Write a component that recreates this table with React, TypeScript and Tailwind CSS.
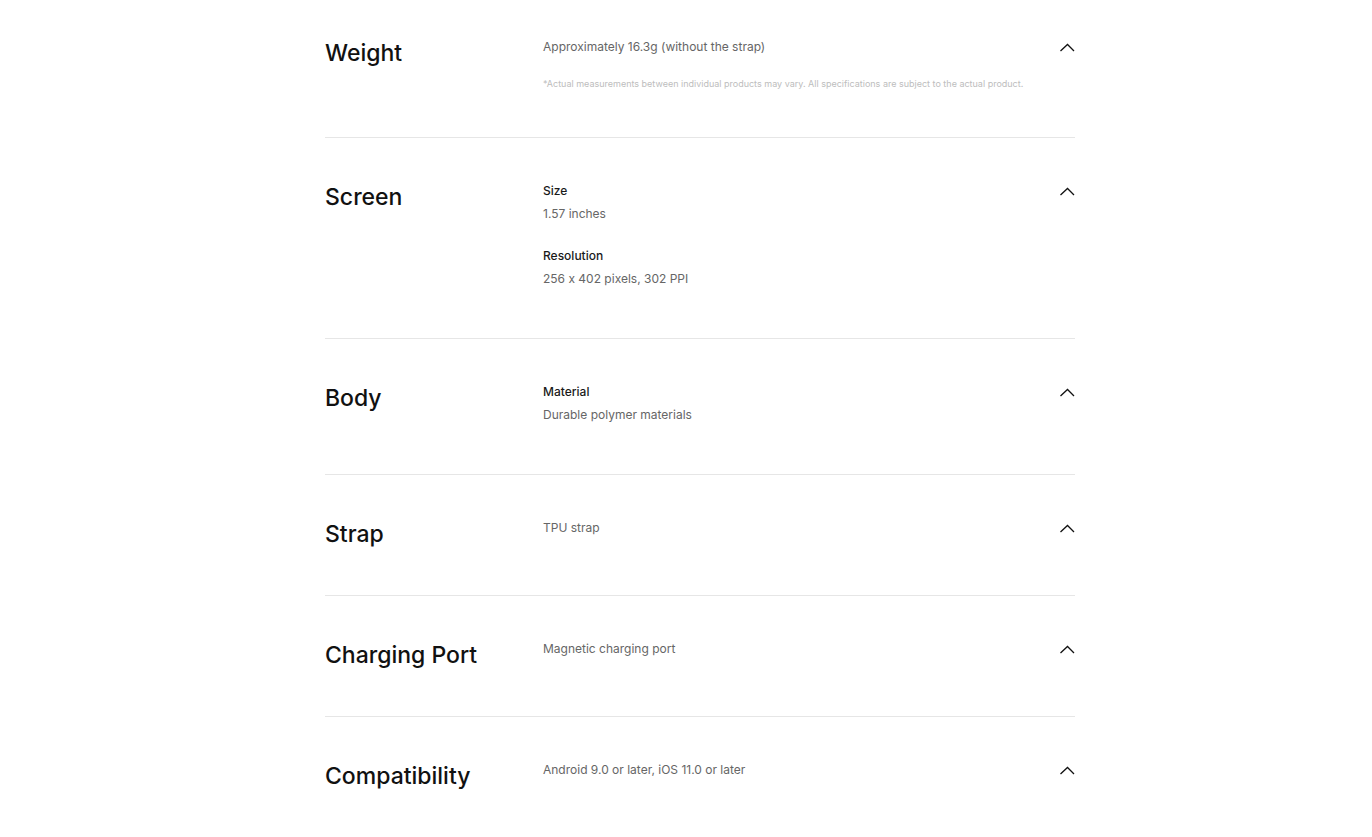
type Item = { label?: string; value: string };

interface Spec {
  title: string;
  items: Item[];
  note?: string;
}

const specs: Spec[] = [
  {
    title: 'Weight',
    items: [{ value: 'Approximately 16.3g (without the strap)' }],
    note: '*Actual measurements between individual products may vary. All specifications are subject to the actual product.',
  },
  {
    title: 'Screen',
    items: [
      { label: 'Size', value: '1.57 inches' },
      { label: 'Resolution', value: '256 x 402 pixels, 302 PPI' },
    ],
  },
  { title: 'Body', items: [{ label: 'Material', value: 'Durable polymer materials' }] },
  { title: 'Strap', items: [{ value: 'TPU strap' }] },
  { title: 'Charging Port', items: [{ value: 'Magnetic charging port' }] },
  { title: 'Compatibility', items: [{ value: 'Android 9.0 or later, iOS 11.0 or later' }] },
];

function ChevronUp() {
  return (
    <svg width="16" height="16" viewBox="0 0 16 16" fill="none" className="mt-[3px] shrink-0">
      <polyline points="1.5,11 8.5,4.5 15,11" stroke="#111" strokeWidth="1.3" />
    </svg>
  );
}

function SpecRow({ spec, first }: { spec: Spec; first: boolean }) {
  return (
    <section
      className={`flex items-start border-b border-[#e6e6e6] last:border-b-0 ${first ? 'pt-[37px] pb-[47px]' : 'pt-[43px] pb-[45px]'}`}
    >
      <h3 className="w-[218px] shrink-0 text-[23px] leading-[32px] font-medium text-[#111]">{spec.title}</h3>
      <div className={`flex flex-1 flex-col gap-[22px] ${spec.note ? '' : 'pb-[4px]'}`}>
        {spec.items.map((item) => (
          <div key={item.value} className="flex flex-col">
            {item.label && <p className="mb-[3px] text-[12px] leading-[20px] font-medium text-[#1a1a1a]">{item.label}</p>}
            <p className="text-[12px] leading-[20px] text-[#666]">{item.value}</p>
          </div>
        ))}
        {spec.note && <p className="-mt-[1px] text-[9px] leading-[12px] text-[#bdbdbd]">{spec.note}</p>}
      </div>
      <ChevronUp />
    </section>
  );
}

export default function App() {
  return (
    <div className="min-h-screen bg-white font-['Inter',sans-serif] [font-feature-settings:'calt'_0]">
      <div className="ml-[325px] w-[750px]">
        {specs.map((spec, i) => (
          <SpecRow key={spec.title} spec={spec} first={i === 0} />
        ))}
      </div>
    </div>
  );
}
